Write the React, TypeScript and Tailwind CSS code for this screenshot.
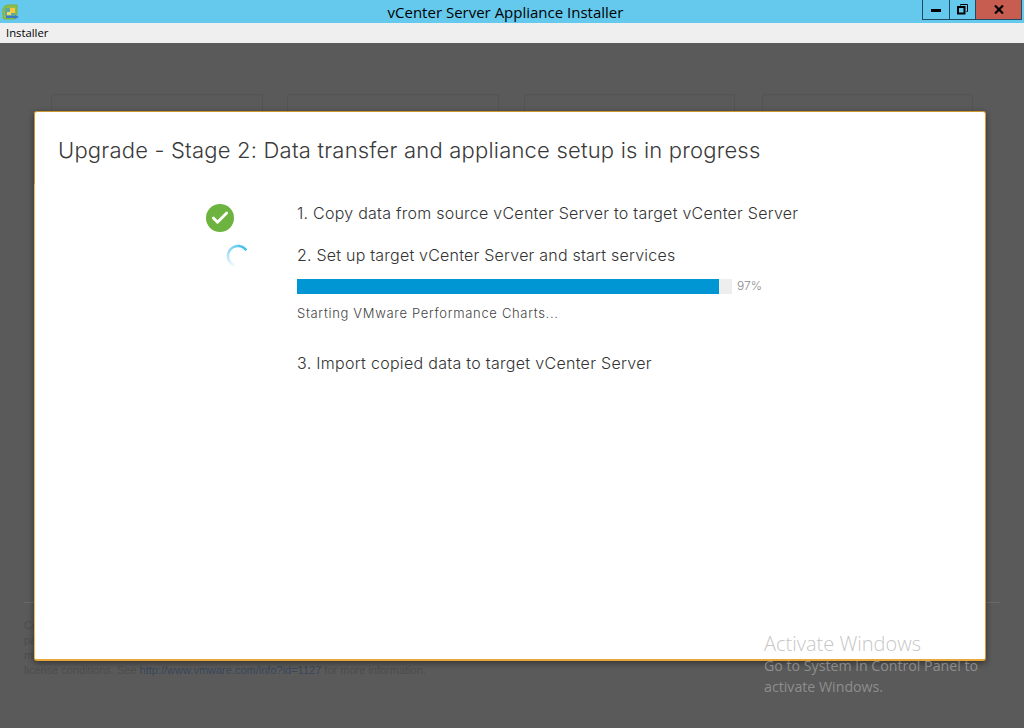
import { Check } from "lucide-react";

const backgroundCards = [
  "ml-[51px] w-[212px]",
  "ml-[24px] w-[212px]",
  "ml-[25px] w-[211px]",
  "ml-[27px] w-[211px]",
];

// faded arc of the spinner, drawn as short segments
const Spinner = () => {
  const segments = Array.from({ length: 36 }, (_, i) => {
    const a0 = ((-35 - i * 6.2) * Math.PI) / 180;
    const a1 = ((-35 - (i + 1) * 6.2) * Math.PI) / 180;
    return {
      d: `M ${12 + 10 * Math.cos(a0)} ${12 + 10 * Math.sin(a0)} A 10 10 0 0 0 ${12 + 10 * Math.cos(a1)} ${12 + 10 * Math.sin(a1)}`,
      opacity: 1 - i / 36,
    };
  });
  return (
    <svg width="24" height="24" viewBox="0 0 24 24" fill="none">
      {segments.map((s, i) => (
        <path key={i} d={s.d} stroke="#1fb3e6" strokeWidth="2.4" opacity={s.opacity} />
      ))}
    </svg>
  );
};

const AppIcon = () => (
  <svg width="18" height="19" viewBox="0 0 18 19">
    <path d="M6 4 L6 3 L16 3 L16 13 L14 13 L14 17 L3 17 L2 16 L2 7 L4 4 Z" fill="#8fbf4a" stroke="#7fae3c" />
    <rect x="4" y="6" width="10" height="8" fill="#5fa8a0" />
    <rect x="9" y="6" width="5" height="5" fill="#f7c93e" />
    <rect x="6" y="10" width="4" height="3" fill="#f7d868" />
    <path d="M5 14 H14 V13 L18 15 L14 17 V16 H5 Z" fill="#3a78c8" />
  </svg>
);

export default function App() {
  return (
    <div className="relative flex h-[728px] w-[1024px] flex-col overflow-hidden bg-[#5a5a5a] font-['Liberation_Sans',sans-serif]">
      {/* window chrome */}
      <div className="flex h-[23px] items-start bg-[#64c9ec]">
        <div className="ml-[1px] mt-[2px]">
          <AppIcon />
        </div>
        <div className="flex-1 pl-[70px] pt-[3px] text-center font-['Open_Sans',sans-serif] text-[15px] leading-[18px] text-black">
          vCenter Server Appliance Installer
        </div>
        <div className="mr-[2px] flex h-[20px] border-x border-b border-[#1f4a60]">
          <div className="flex w-[27px] items-center justify-center border-r border-[#1f4a60]">
            <div className="mt-[2px] h-[3px] w-[10px] bg-black" />
          </div>
          <div className="flex w-[26px] items-center justify-center border-r border-[#1f4a60]">
            <svg width="11" height="11" viewBox="0 0 11 11" fill="none" stroke="#000">
              <path d="M3.5 1.5 V0.5 H10.5 V7.5 H9.5" strokeWidth="1" />
              <rect x="1" y="3" width="6.5" height="6.5" strokeWidth="2" />
            </svg>
          </div>
          <div className="flex w-[45px] items-center justify-center bg-[#c75c50]">
            <svg width="10" height="9" viewBox="0 0 10 9" fill="none" stroke="#000" strokeWidth="2.2">
              <path d="M1 0.5 L9 8.5 M9 0.5 L1 8.5" />
            </svg>
          </div>
        </div>
      </div>
      <div className="flex h-[20px] items-center bg-[#efefef] pl-[6px] font-['Open_Sans',sans-serif] text-[11.3px] text-black">
        Installer
      </div>

      {/* page behind the dialog */}
      <div className="flex flex-1 flex-col">
        <div className="mt-[51px] flex">
          {backgroundCards.map((w, i) => (
            <div key={i} className={`h-[60px] rounded-[3px] border border-[#535353] ${w}`} />
          ))}
        </div>
        <div className="mx-[24px] mt-[448px] border-t border-[#6a6a6a] pt-[15px] text-[11px] leading-[15px] text-[#4c4c4c]">
          <div>Certain</div>
          <div>part</div>
          <div>may</div>
          <div>
            license conditions. See <span className="text-[#38475a]">http://www.vmware.com/info?id=1127</span> for more information.
          </div>
        </div>
      </div>

      {/* dialog */}
      <div className="absolute left-[34px] top-[111px] flex h-[550px] w-[952px] flex-col rounded-[3px] border-x border-t border-b-2 border-l-[#efb457] border-r-[#d89a2c] border-t-[#c8962f] border-b-[#e8a83c] bg-white shadow-[0_2px_6px_rgba(0,0,0,0.45)]">
        <div className="-ml-px h-[72px] border-l border-[#c8962f] pl-[23px] pt-[23px] font-['Inter',sans-serif] text-[22px] font-light leading-[30px] tracking-[0.2px] text-[#3a3a3a]">
          Upgrade - Stage 2: Data transfer and appliance setup is in progress
        </div>
        <div className="flex flex-col pl-[171px] font-['Inter',sans-serif] font-light text-[#333]">
          <div className="flex h-[31px] items-start">
            <div className="mt-[20px] flex h-[28px] w-[28px] shrink-0 items-center justify-center rounded-full bg-[#6db33f]">
              <Check className="h-[20px] w-[20px] text-white" strokeWidth={3.4} />
            </div>
            <div className="ml-[63px] mt-[17px] text-[16px] leading-[24px] tracking-[0.25px]">
              1. Copy data from source vCenter Server to target vCenter Server
            </div>
          </div>
          <div className="mt-[26px] flex items-center">
            <div className="ml-[20px] flex w-[71px] shrink-0 pt-[3px]">
              <Spinner />
            </div>
            <div className="text-[16px] leading-[24px] tracking-[0.22px]">2. Set up target vCenter Server and start services</div>
          </div>
          <div className="ml-[91px] mt-[9px] flex items-center">
            <div className="h-[15px] w-[435px] bg-[#eeeeee]">
              <div className="h-full bg-[#0095d3]" style={{ width: "97%" }} />
            </div>
            <div className="ml-[5px] text-[12px] text-[#8a8a8a]">97%</div>
          </div>
          <div className="ml-[91px] mt-[8px] text-[13px] leading-[20px] tracking-[0.68px] text-[#444]">
            Starting VMware Performance Charts...
          </div>
          <div className="ml-[91px] mt-[28px] text-[16px] leading-[24px] tracking-[0.3px]">
            3. Import copied data to target vCenter Server
          </div>
        </div>
      </div>

      {/* activation watermark */}
      <div className="absolute left-[764px] top-[630px] font-['Open_Sans',sans-serif] text-[#a8a8a8ad]">
        <div className="text-[20px] font-light leading-[27px]">Activate Windows</div>
        <div className="mt-[-2px] text-[14.2px] leading-[21px]">
          Go to System in Control Panel to
          <br />
          activate Windows.
        </div>
      </div>
    </div>
  );
}
